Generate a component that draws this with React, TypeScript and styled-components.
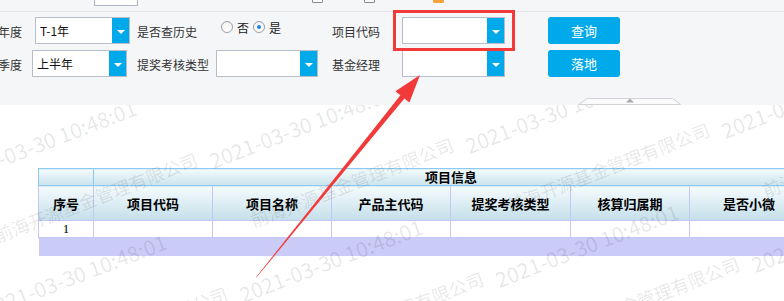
import React from 'react';
import styled, { createGlobalStyle } from 'styled-components';

const GlobalStyle = createGlobalStyle`
  html, body {
    margin: 0;
    padding: 0;
    overflow: hidden;
    background: #fff;
  }
  body {
    font-family: "Noto Sans CJK SC", "Noto Sans", sans-serif;
  }
`;

const Page = styled.div`
  position: relative;
  width: 784px;
  height: 301px;
  overflow: hidden;
  background: #fff;
`;

/* ---------- filter panel ---------- */

const Panel = styled.div`
  position: relative;
  z-index: 2;
  height: 105px;
  background: #f5f6f8;
`;

const Toolbar = styled.div`
  height: 11px;
  border-bottom: 1px solid #e3e5ea;
  overflow: hidden;
  display: flex;
  align-items: flex-start;
`;

const ToolInput = styled.div`
  margin-left: 94px;
  margin-top: -14px;
  width: 44px;
  height: 20px;
  box-sizing: border-box;
  border: 1px solid #b0b4c6;
  background: #fff;
`;

const ToolText = styled.span<{ $ml: number; $color: string }>`
  margin-left: ${p => p.$ml}px;
  margin-top: -15px;
  font-size: 12px;
  line-height: 16px;
  color: ${p => p.$color};
  white-space: nowrap;
`;

const ToolIcon = styled.span<{ $ml: number; $bg: string; $border: string }>`
  margin-left: ${p => p.$ml}px;
  margin-top: -9px;
  width: 11px;
  height: 12px;
  box-sizing: border-box;
  border: 1px solid ${p => p.$border};
  background: ${p => p.$bg};
  border-radius: 1px;
`;

const FilterGrid = styled.div`
  display: grid;
  grid-template-columns: 37px 102px 79px 116px 70px 146px 72px;
  grid-template-rows: 27px 27px;
  row-gap: 6px;
  margin: 5px 0 0 -2px;
  align-items: center;
`;

const Label = styled.span`
  font-size: 12px;
  color: #333;
  white-space: nowrap;
  padding-top: 1px;
`;

const Select = styled.div<{ $w: number; $shift?: number }>`
  width: ${p => p.$w}px;
  height: 27px;
  margin-left: ${p => p.$shift || 0}px;
  box-sizing: border-box;
  border: 1px solid #b9bccb;
  background: #fff;
  display: flex;
`;

const SelectValue = styled.span`
  flex: 1;
  padding-left: 4px;
  font-size: 12px;
  line-height: 25px;
  color: #111;
`;

const SelectArrow = styled.span`
  width: 17px;
  background: #00a9ea;
  display: flex;
  align-items: center;
  justify-content: center;

  &::after {
    content: '';
    margin-top: 2px;
    border-left: 4px solid transparent;
    border-right: 4px solid transparent;
    border-top: 4px solid #fff;
  }
`;

const RadioGroup = styled.div`
  align-self: start;
  display: flex;
  align-items: center;
  height: 20px;
  padding-left: 5px;
  font-size: 12px;
  color: #222;
`;

const Radio = styled.span<{ $checked?: boolean; $ml?: number }>`
  position: relative;
  width: 12px;
  height: 12px;
  margin-left: ${p => p.$ml || 0}px;
  margin-right: 4px;
  box-sizing: border-box;
  border: 1px solid #9c9ca4;
  border-radius: 50%;
  background: linear-gradient(#f2f2f2, #fff);

  &::after {
    content: '';
    display: ${p => (p.$checked ? 'block' : 'none')};
    position: absolute;
    left: 3px;
    top: 3px;
    width: 4px;
    height: 4px;
    border-radius: 50%;
    background: #1e86e0;
  }
`;

const Button = styled.button`
  width: 72px;
  height: 27px;
  border: none;
  border-radius: 3px;
  background: #00a9ea;
  color: #fff;
  font-family: "Noto Sans CJK SC", sans-serif;
  font-size: 13px;
  padding: 0;
`;

const CollapseTab = styled.svg`
  position: absolute;
  left: 577px;
  top: 96px;
`;

/* ---------- table ---------- */

const TableWrap = styled.div`
  position: relative;
  z-index: 0;
  margin: 63px 0 0 38px;
`;

const Grid = styled.table`
  border-collapse: collapse;
  table-layout: fixed;
  width: 770px;
`;

const GroupCell = styled.th`
  height: 16px;
  padding: 0;
  border: 1px solid #8ccaf2;
  background: linear-gradient(#f3fafd, #cbe4ee);
  font-size: 13px;
  font-weight: 700;
  line-height: 16px;
  color: #000;
  text-align: center;
`;

const HeadCell = styled.th`
  height: 34px;
  padding: 0;
  border: 1px solid #c6c6f4;
  background: linear-gradient(#f6fbfe, #c4dfea);
  font-size: 13px;
  font-weight: 700;
  color: #000;
  text-align: center;
  white-space: nowrap;
`;

const DataCell = styled.td`
  height: 16px;
  padding: 0;
  border: 1px solid #c6c6f4;
  background: #fff;
  font-family: "Liberation Serif", serif;
  font-size: 13px;
  line-height: 16px;
  text-align: center;
  color: #000;
`;

const FooterCell = styled.td`
  height: 18px;
  padding: 0;
  border: none;
  background: #cbcbf7;
`;

/* ---------- watermark & annotation ---------- */

const Watermark = styled.div`
  position: absolute;
  inset: 0;
  z-index: 1;
  pointer-events: none;
`;

const Mark = styled.span<{ $size: number }>`
  position: absolute;
  font-family: "Noto Sans CJK SC", sans-serif;
  font-size: ${p => p.$size}px;
  line-height: ${p => p.$size}px;
  color: rgba(0, 0, 0, 0.1);
  white-space: nowrap;
  transform-origin: 0 100%;
  transform: rotate(-21deg);
`;

const RedBox = styled.div`
  position: absolute;
  z-index: 3;
  left: 393px;
  top: 10px;
  width: 122px;
  height: 41px;
  box-sizing: border-box;
  border: 3px solid #f23a3a;
`;

const Arrow = styled.svg`
  position: absolute;
  z-index: 3;
  left: 0;
  top: 0;
  pointer-events: none;
`;

const columns = ['序号', '项目代码', '项目名称', '产品主代码', '提奖考核类型', '核算归属期', '是否小微'];
const widths = [55, 119, 119, 119, 120, 119, 119];

const marks: { x: number; y: number; size: number; text: string }[] = [];
for (let j = -1; j <= 1; j++) {
  for (let i = -1; i <= 4; i++) {
    const x = -42 + 256 * i + 30 * j;
    const y = 186 - 15 * i + 134 * j;
    marks.push({ x, y, size: 21, text: '2021-03-30 10:48:01' });
    marks.push({ x: x + 40, y: y + 58, size: 18, text: '前海开源基金管理有限公司' });
  }
}

const App: React.FC = () => {
  return (
    <Page>
      <GlobalStyle />
      <Panel>
        <Toolbar>
          <ToolInput />
          <ToolText $ml={12} $color="#000">：</ToolText>
          <ToolText $ml={30} $color="#8cc0ea">查询条件</ToolText>
          <ToolText $ml={12} $color="#8cc0ea">高级查询</ToolText>
          <ToolIcon $ml={12} $bg="#fff" $border="#8a8a8a" />
          <ToolText $ml={1} $color="#333">导出</ToolText>
          <ToolIcon $ml={16} $bg="#fff" $border="#8a8a8a" />
          <ToolText $ml={12} $color="#222">打印</ToolText>
          <ToolIcon $ml={22} $bg="#f5a23c" $border="#f5a23c" />
          <ToolText $ml={3} $color="#4a2a5a">刷新</ToolText>
        </Toolbar>

        <FilterGrid>
          <Label>年度</Label>
          <Select $w={95}>
            <SelectValue>T-1年</SelectValue>
            <SelectArrow />
          </Select>
          <Label>是否查历史</Label>
          <RadioGroup>
            <Radio />否
            <Radio $ml={4} $checked />是
          </RadioGroup>
          <Label>项目代码</Label>
          <Select $w={103}>
            <SelectValue />
            <SelectArrow />
          </Select>
          <Button>查询</Button>

          <Label>季度</Label>
          <Select $w={95} $shift={-3}>
            <SelectValue>上半年</SelectValue>
            <SelectArrow />
          </Select>
          <Label>提奖考核类型</Label>
          <Select $w={102}>
            <SelectValue />
            <SelectArrow />
          </Select>
          <Label>基金经理</Label>
          <Select $w={103}>
            <SelectValue />
            <SelectArrow />
          </Select>
          <Button>落地</Button>
        </FilterGrid>

        <CollapseTab width="106" height="10" viewBox="0 0 106 10">
          <polygon points="10.5,2.5 95.5,2.5 103.5,8.5 1.5,8.5" fill="#fbfbfc" stroke="#d2d2d6" />
          <polygon points="53,2.5 57,6.5 49,6.5" fill="#a9a9ae" />
        </CollapseTab>
      </Panel>

      <TableWrap>
        <Grid>
          <colgroup>
            {widths.map((w, i) => (
              <col key={i} style={{ width: w }} />
            ))}
          </colgroup>
          <thead>
            <tr>
              <GroupCell />
              <GroupCell colSpan={6}>项目信息</GroupCell>
            </tr>
            <tr>
              {columns.map(c => (
                <HeadCell key={c}>{c}</HeadCell>
              ))}
            </tr>
          </thead>
          <tbody>
            <tr>
              <DataCell>1</DataCell>
              {columns.slice(1).map(c => (
                <DataCell key={c} />
              ))}
            </tr>
            <tr>
              <FooterCell colSpan={7} />
            </tr>
          </tbody>
        </Grid>
      </TableWrap>

      <Watermark>
        {marks.map((m, i) => (
          <Mark key={i} $size={m.size} style={{ left: m.x, top: m.y - m.size }}>
            {m.text}
          </Mark>
        ))}
      </Watermark>

      <RedBox />
      <Arrow width="784" height="301" viewBox="0 0 784 301">
        <polygon
          points="256.4,277.6 404.4,98.5 409.4,102.5 420,75 395.4,91.3 400.4,95.3 256,277.2"
          fill="#f23a3a"
        />
      </Arrow>
    </Page>
  );
};

export default App;
